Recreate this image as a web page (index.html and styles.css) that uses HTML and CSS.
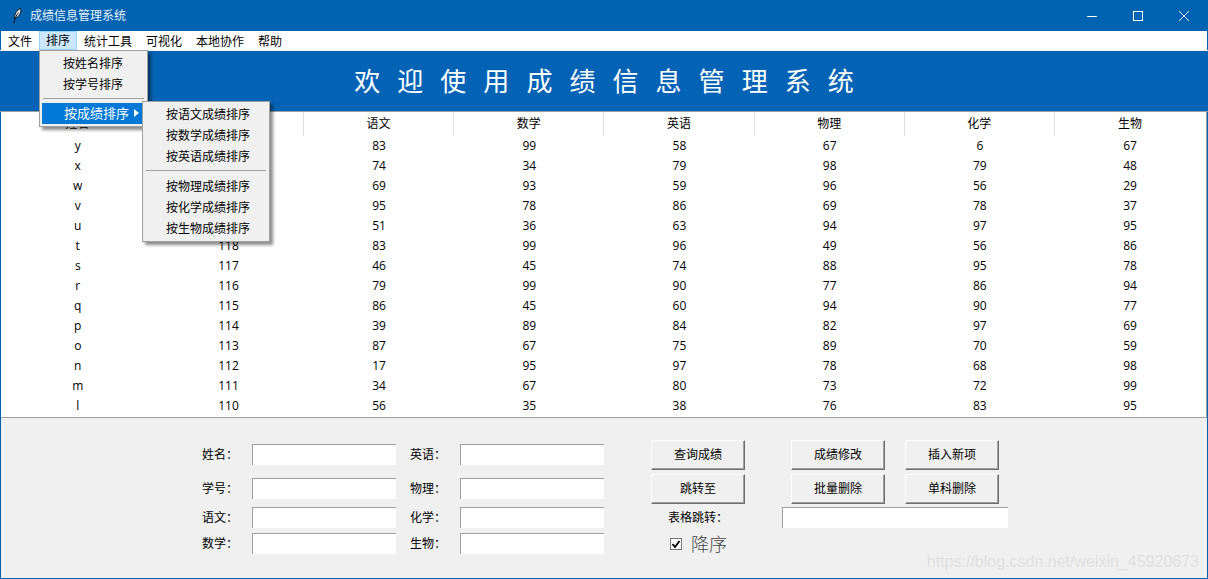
FILE: index.html
```html
<!DOCTYPE html>
<html lang="zh">
<head>
<meta charset="utf-8">
<title>成绩信息管理系统</title>
<link rel="stylesheet" href="styles.css">
</head>
<body>
<div class="window">
  <header class="titlebar">
    <svg class="feather" width="9" height="16" viewBox="0 0 9 16"><path d="M7.8 .6C3.5 2 1.4 6 1.6 10.5C5.6 9.4 8.6 5.5 7.8 .6Z" fill="#e8eef4" stroke="#0a0f18" stroke-width="1"/><path d="M5.5 4.5C3.2 7.5 1.6 11 .8 15.5" fill="none" stroke="#0a0f18" stroke-width="1"/></svg>
    <span class="title">成绩信息管理系统</span>
    <div class="controls">
      <svg width="46" height="30" viewBox="0 0 46 30"><path d="M18 15.5H28" stroke="#fff"/></svg>
      <svg width="46" height="30" viewBox="0 0 46 30"><rect x="18.5" y="10.5" width="9" height="9" fill="none" stroke="#fff"/></svg>
      <svg width="46" height="30" viewBox="0 0 46 30"><path d="M18 10L28 20M28 10L18 20" stroke="#fff"/></svg>
    </div>
  </header>
  <nav class="menubar">
    <span class="menu-item">文件</span>
    <span class="menu-item active">排序</span>
    <span class="menu-item">统计工具</span>
    <span class="menu-item">可视化</span>
    <span class="menu-item">本地协作</span>
    <span class="menu-item">帮助</span>
  </nav>
  <div class="banner">欢迎使用成绩信息管理系统</div>
  <section class="table">
    <div class="row head"><span>姓名</span><span></span><span>语文</span><span>数学</span><span>英语</span><span>物理</span><span>化学</span><span>生物</span></div>
    <div class="row"><span>y</span><span></span><span>83</span><span>99</span><span>58</span><span>67</span><span>6</span><span>67</span></div>
    <div class="row"><span>x</span><span></span><span>74</span><span>34</span><span>79</span><span>98</span><span>79</span><span>48</span></div>
    <div class="row"><span>w</span><span></span><span>69</span><span>93</span><span>59</span><span>96</span><span>56</span><span>29</span></div>
    <div class="row"><span>v</span><span></span><span>95</span><span>78</span><span>86</span><span>69</span><span>78</span><span>37</span></div>
    <div class="row"><span>u</span><span></span><span>51</span><span>36</span><span>63</span><span>94</span><span>97</span><span>95</span></div>
    <div class="row"><span>t</span><span>118</span><span>83</span><span>99</span><span>96</span><span>49</span><span>56</span><span>86</span></div>
    <div class="row"><span>s</span><span>117</span><span>46</span><span>45</span><span>74</span><span>88</span><span>95</span><span>78</span></div>
    <div class="row"><span>r</span><span>116</span><span>79</span><span>99</span><span>90</span><span>77</span><span>86</span><span>94</span></div>
    <div class="row"><span>q</span><span>115</span><span>86</span><span>45</span><span>60</span><span>94</span><span>90</span><span>77</span></div>
    <div class="row"><span>p</span><span>114</span><span>39</span><span>89</span><span>84</span><span>82</span><span>97</span><span>69</span></div>
    <div class="row"><span>o</span><span>113</span><span>87</span><span>67</span><span>75</span><span>89</span><span>70</span><span>59</span></div>
    <div class="row"><span>n</span><span>112</span><span>17</span><span>95</span><span>97</span><span>78</span><span>68</span><span>98</span></div>
    <div class="row"><span>m</span><span>111</span><span>34</span><span>67</span><span>80</span><span>73</span><span>72</span><span>99</span></div>
    <div class="row"><span>l</span><span>110</span><span>56</span><span>35</span><span>38</span><span>76</span><span>83</span><span>95</span></div>
  </section>
  <section class="panel">
    <div class="form">
      <label>姓名：</label><span class="entry"></span><label>英语：</label><span class="entry"></span>
      <label>学号：</label><span class="entry"></span><label>物理：</label><span class="entry"></span>
      <label>语文：</label><span class="entry"></span><label>化学：</label><span class="entry"></span>
      <label>数学：</label><span class="entry"></span><label>生物：</label><span class="entry"></span>
    </div>
    <div class="actions">
      <button class="btn">查询成绩</button>
      <div class="btn-pair"><button class="btn">成绩修改</button><button class="btn">插入新项</button></div>
      <button class="btn">跳转至</button>
      <div class="btn-pair"><button class="btn">批量删除</button><button class="btn">单科删除</button></div>
      <label class="jump-label">表格跳转：</label><span class="entry wide"></span>
      <div class="check">
        <svg width="12" height="12" viewBox="0 0 12 12"><rect x=".5" y=".5" width="11" height="11" fill="#fff" stroke="#777"/><path d="M2.5 6L5 9L9.5 3" fill="none" stroke="#000" stroke-width="1.8"/></svg>
        <span>降序</span>
      </div>
    </div>
    <div class="watermark">https://blog.csdn.net/weixin_45920673</div>
  </section>

  <div class="popup sort-menu">
    <div class="popup-item">按姓名排序</div>
    <div class="popup-item">按学号排序</div>
    <div class="sep"></div>
    <div class="popup-item selected">按成绩排序<i class="arrow"></i></div>
  </div>
  <div class="popup sub-menu">
    <div class="popup-item">按语文成绩排序</div>
    <div class="popup-item">按数学成绩排序</div>
    <div class="popup-item">按英语成绩排序</div>
    <div class="sep"></div>
    <div class="popup-item">按物理成绩排序</div>
    <div class="popup-item">按化学成绩排序</div>
    <div class="popup-item">按生物成绩排序</div>
  </div>
</div>
</body>
</html>
```
FILE: styles.css
```css
* { box-sizing: border-box; }
html, body { margin: 0; height: 100%; overflow: hidden; }
body { font: 12px/16px "Open Sans", "Noto Sans CJK SC", sans-serif; color: #000; }
.window {
  position: relative;
  width: 1208px;
  height: 579px;
  display: flex;
  flex-direction: column;
  background: #f0f0f0;
  border: 1px solid #0063b1;
  border-top: 0;
}
.titlebar {
  height: 31px;
  flex: none;
  margin: 0 -1px;
  background: #0063b1;
  color: #e8f0f7;
  display: flex;
  align-items: center;
  padding-left: 13px;
}
.feather { margin-right: 8px; }
.title { line-height: 31px; }
.controls { margin-left: auto; display: flex; margin-right: 1px; }
.controls svg { display: block; }
.menubar {
  height: 19px;
  flex: none;
  background: #fff;
  display: flex;
  align-items: stretch;
}
.menu-item {
  padding: 1px 7px 0;
  line-height: 18px;
  border: 1px solid transparent;
  border-width: 1px 0;
}
.menu-item.active { background: #cce8ff; border: 1px solid #99d1ff; padding: 0 6px; }
.banner {
  height: 62px;
  flex: none;
  margin: 0 -1px;
  background: #0563b5;
  border-top: 1px solid #f0f0f0;
  border-bottom: 1px solid #a0a0a0;
  color: #fff;
  font: 400 26px/57px "Noto Sans CJK SC", sans-serif;
  letter-spacing: 17.05px;
  text-align: center;
  padding-left: 17px;
}
.table {
  height: 306px;
  flex: none;
  background: #fff;
  border-bottom: 1px solid #a0a0a0;
  border-right: 1px solid #a0a0a0;
  overflow: hidden;
  padding-left: 1.5px;
}
.row {
  display: grid;
  grid-template-columns: 150.5px 151px repeat(6, 150.2px);
  height: 20px;
  line-height: 20px;
  text-align: center;
}
.row.head { height: 24px; line-height: 24px; }
.row.head span { border-right: 1px solid #e0e0e0; }
.row.head span:last-child { border-right: 0; }
.panel {
  position: relative;
  flex: 1;
  display: flex;
  align-items: flex-start;
  padding: 22px 0 0 201px;
}
.form {
  display: grid;
  grid-template-columns: 50px 144px 64px 144px;
  grid-template-rows: 34px 29px 26px 21px;
  margin-top: 4px;
  width: 449px;
}
.form label { line-height: 21px; }
.form label:nth-of-type(even) { padding-left: 14px; }
.entry {
  display: block;
  height: 21px;
  background: #fff;
  border-top: 1px solid #a0a0a0;
  border-left: 1px solid #a0a0a0;
}
.actions {
  display: grid;
  grid-template-columns: 131px 226px;
  grid-template-rows: 34px 33px 26px 21px;
}
.btn-pair { display: flex; gap: 20px; padding-left: 9px; }
.btn {
  width: 94px;
  height: 30px;
  padding: 0;
  font: inherit;
  color: #000;
  background: #f0f0f0;
  border: 1px solid;
  border-color: #fff #6e6e6e #6e6e6e #fff;
  box-shadow: inset -1px -1px 0 #a0a0a0;
}
.jump-label { line-height: 21px; padding-left: 17px; }
.wide { width: 226px; }
.check {
  display: flex;
  align-items: center;
  gap: 9px;
  height: 21px;
  padding-left: 19px;
  color: #444;
  font: 300 18px/19px "Noto Sans CJK SC", sans-serif;
}
.watermark {
  position: absolute;
  right: 8px;
  bottom: 6px;
  font: 16px/20px "Liberation Sans", sans-serif;
  color: #e0e0e0;
}
.popup {
  position: absolute;
  background: #f0f0f0;
  border: 1px solid #a0a0a0;
  box-shadow: 3px 3px 3px rgba(0, 0, 0, .45);
  padding: 2px;
}
.sort-menu { left: 38px; top: 50px; width: 109px; height: 77px; }
.sub-menu { left: 141px; top: 101px; width: 128px; height: 141px; }
.popup-item {
  position: relative;
  height: 21px;
  line-height: 21px;
  padding-left: 21px;
  white-space: nowrap;
}
.sep { height: 1px; background: #a0a0a0; margin: 3px 1px 4px; }
.sub-menu .sep { margin: 3px 1px 5px; }
.selected {
  background: #0078d7;
  color: #fff;
  font-size: 13px;
  line-height: 20px;
  padding-left: 22px;
}
.arrow {
  position: absolute;
  right: 6px;
  top: 6px;
  width: 0;
  height: 0;
  border: 4px solid transparent;
  border-left: 5px solid #fff;
  border-right: 0;
}
```
